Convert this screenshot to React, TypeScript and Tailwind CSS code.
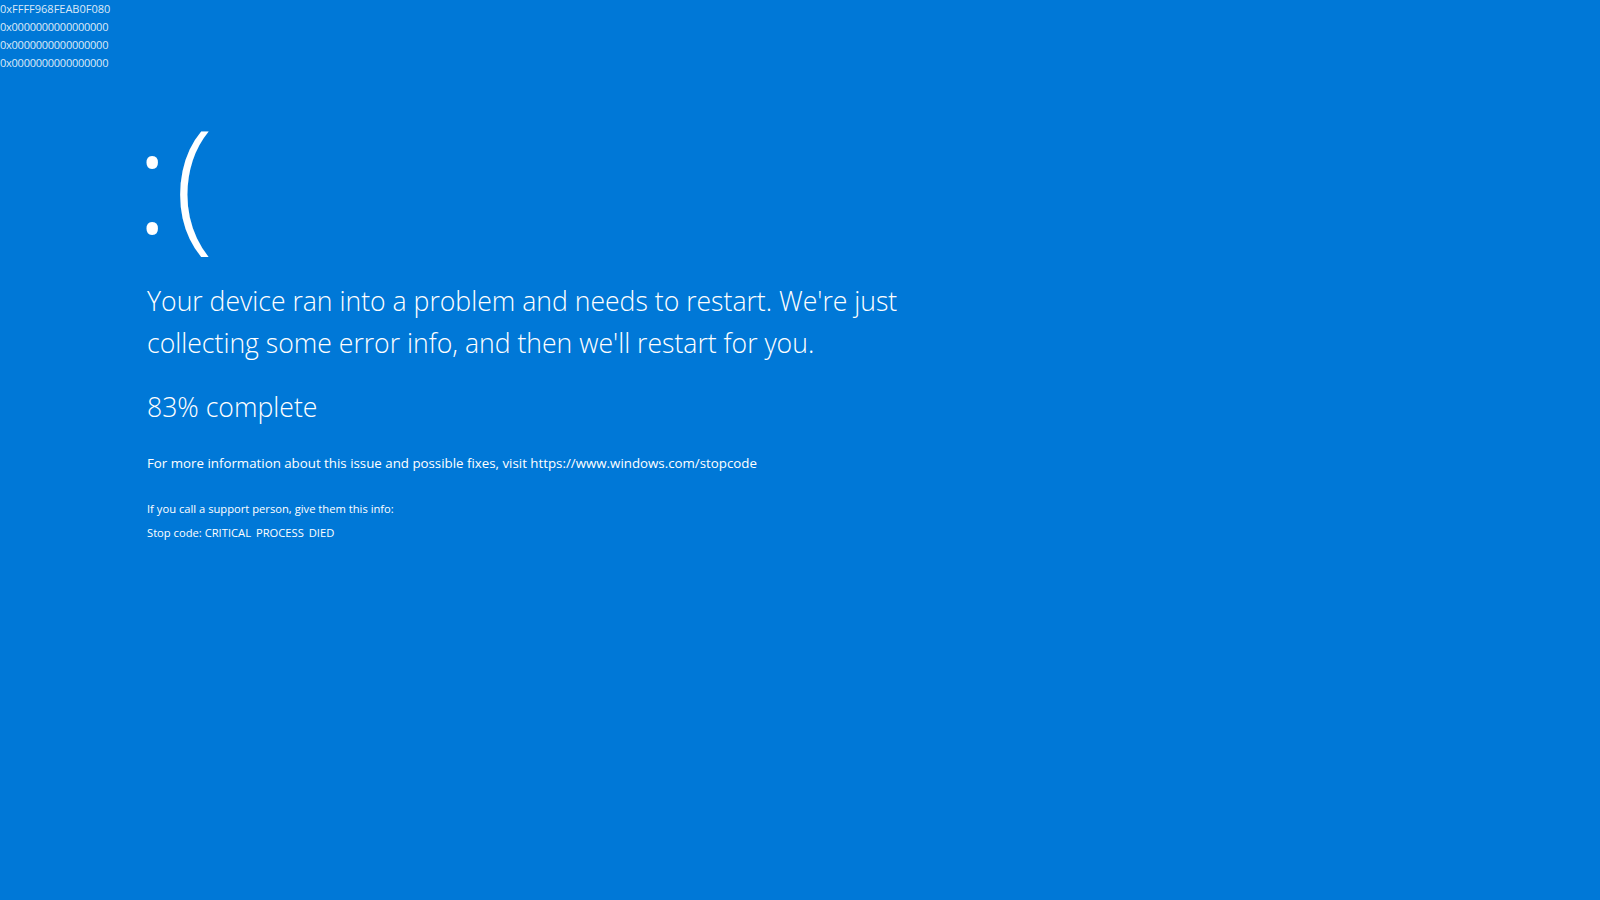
import React from 'react';

const hexLines = [
	'0xFFFF968FEAB0F080',
	'0x0000000000000000',
	'0x0000000000000000',
	'0x0000000000000000',
];

export default function App() {
	return (
		<div
			className="w-[1600px] h-[900px] overflow-hidden bg-[#0078d7] text-white flex flex-col"
			style={{ fontFamily: '"Open Sans", "Noto Sans", sans-serif' }}
		>
			{/* debug dump in the corner */}
			<div className="text-[11px] leading-[18px] text-[#dce9f7]">
				{hexLines.map((line, i) => (
					<div key={i} className={i > 0 ? 'tracking-[-0.25px]' : ''}>
						{line}
					</div>
				))}
			</div>

			<div className="pl-[147px] flex flex-col">
				<div className="mt-[33px] ml-[-12px] h-[146px] text-[144px] leading-[146px] font-light tracking-[5px]">:(</div>

				<p className="mt-[29px] w-[800px] text-[26.6px] leading-[42px] font-light">
					Your device ran into a problem and needs to restart. We're just collecting some error info, and then we'll restart for you.
				</p>

				<p className="mt-[22px] text-[26.6px] leading-[42px] font-light">83% complete</p>

				<p className="mt-[25px] text-[13.3px] leading-[20px]">
					For more information about this issue and possible fixes, visit https://www.windows.com/stopcode
				</p>

				<p className="mt-[28px] text-[11.2px] leading-[16px]">If you call a support person, give them this info:</p>
				<p className="mt-[8px] text-[11.2px] leading-[16px]">
					Stop code: CRITICAL<span className="text-transparent">_</span>PROCESS<span className="text-transparent">_</span>DIED
				</p>
			</div>
		</div>
	);
}
